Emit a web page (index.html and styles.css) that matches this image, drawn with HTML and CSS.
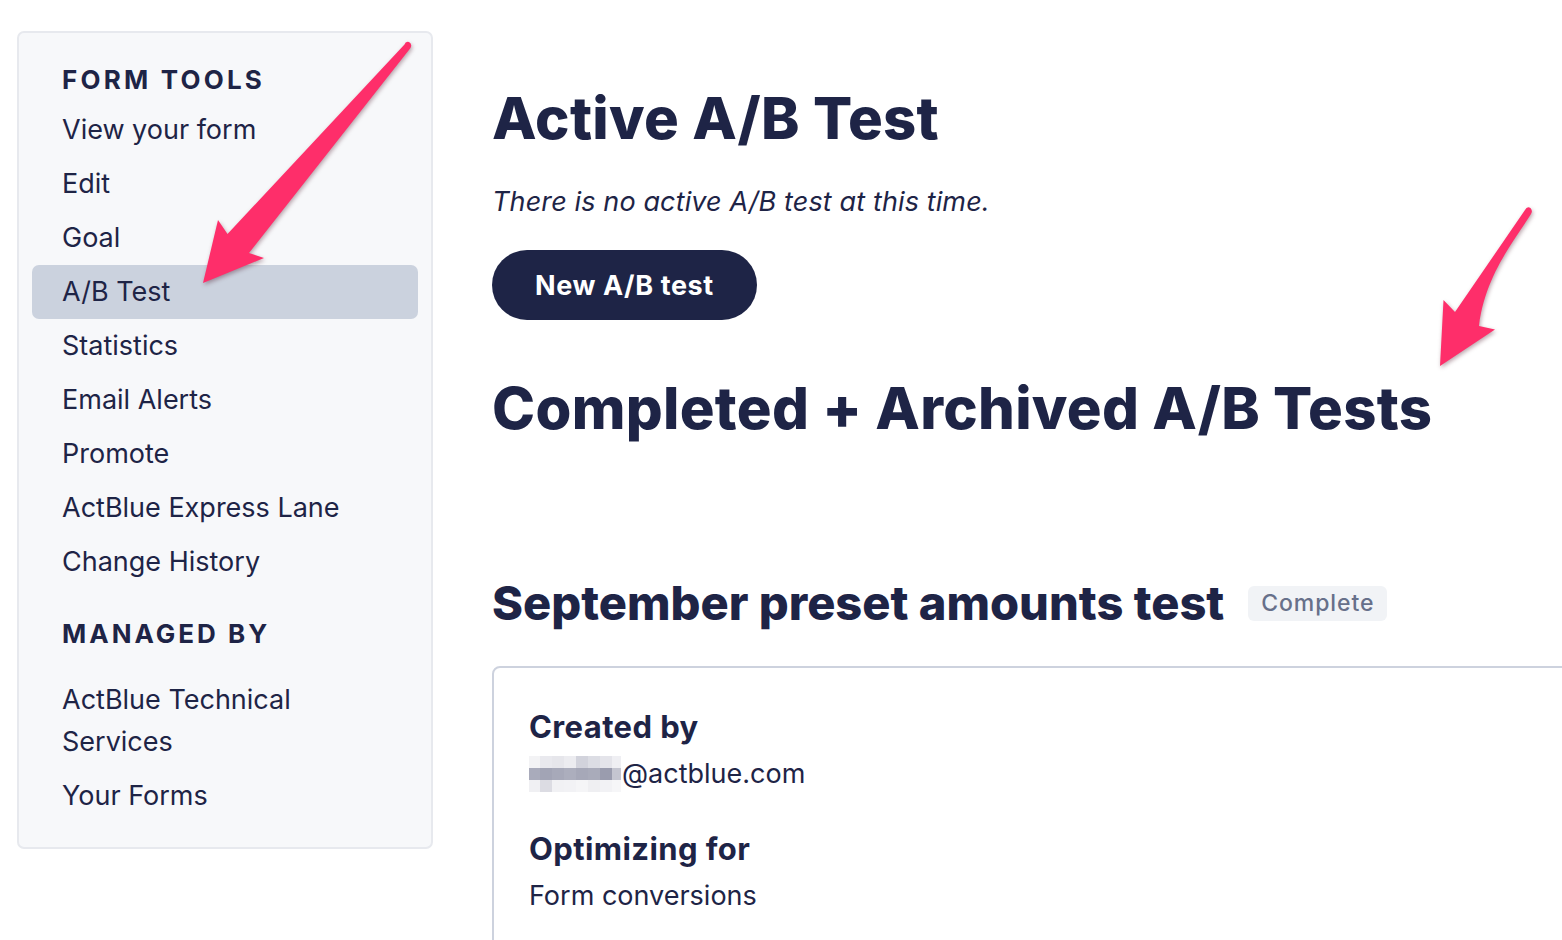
FILE: index.html
```html
<!DOCTYPE html>
<html lang="en">
<head>
<meta charset="utf-8">
<title>A/B Test</title>
<link rel="stylesheet" href="styles.css">
</head>
<body>
<div class="page">
  <aside class="sidebar">
    <h3 class="side-head">FORM TOOLS</h3>
    <ul class="side-list">
      <li class="side-item">View your form</li>
      <li class="side-item">Edit</li>
      <li class="side-item">Goal</li>
      <li class="side-item active">A/B Test</li>
      <li class="side-item">Statistics</li>
      <li class="side-item">Email Alerts</li>
      <li class="side-item">Promote</li>
      <li class="side-item">ActBlue Express Lane</li>
      <li class="side-item">Change History</li>
    </ul>
    <h3 class="side-head managed">MANAGED BY</h3>
    <ul class="side-list managed-list">
      <li class="side-item">ActBlue Technical Services</li>
      <li class="side-item">Your Forms</li>
    </ul>
  </aside>
  <main class="main">
    <h1 class="big-title">Active A/B Test</h1>
    <p class="empty-note">There is no active A/B test at this time.</p>
    <button class="btn-primary">New A/B test</button>
    <h1 class="big-title archived">Completed + Archived A/B Tests</h1>
    <div class="test-head">
      <h2 class="test-title">September preset amounts test</h2>
      <span class="badge">Complete</span>
    </div>
    <section class="card">
      <div class="field-label">Created by</div>
      <div class="field-value"><svg class="blur" width="92" height="36" viewBox="0 0 92 36">
        <rect x="0" y="0" width="92" height="36" fill="#f6f6f8"/>
        <rect x="0" y="0" width="11" height="12" fill="#f3f3f5"/>
        <rect x="11" y="0" width="12" height="12" fill="#e9e9ee"/>
        <rect x="23" y="0" width="12" height="12" fill="#e6e6eb"/>
        <rect x="35" y="0" width="12" height="12" fill="#ececf0"/>
        <rect x="47" y="0" width="12" height="12" fill="#d2d3dc"/>
        <rect x="59" y="0" width="12" height="12" fill="#dcdde4"/>
        <rect x="71" y="0" width="12" height="12" fill="#e4e4ea"/>
        <rect x="83" y="0" width="9" height="12" fill="#efeff3"/>
        <rect x="0" y="12" width="11" height="12" fill="#a9abbb"/>
        <rect x="11" y="12" width="12" height="12" fill="#a2a4b5"/>
        <rect x="23" y="12" width="12" height="12" fill="#a7a9b9"/>
        <rect x="35" y="12" width="12" height="12" fill="#acaebd"/>
        <rect x="47" y="12" width="12" height="12" fill="#a6a8b8"/>
        <rect x="59" y="12" width="12" height="12" fill="#a9abba"/>
        <rect x="71" y="12" width="12" height="12" fill="#9a9cae"/>
        <rect x="83" y="12" width="9" height="12" fill="#c4c5d0"/>
        <rect x="0" y="24" width="11" height="12" fill="#f0f0f3"/>
        <rect x="11" y="24" width="12" height="12" fill="#dcdce3"/>
        <rect x="23" y="24" width="12" height="12" fill="#f1f1f4"/>
        <rect x="35" y="24" width="12" height="12" fill="#f2f2f5"/>
        <rect x="47" y="24" width="12" height="12" fill="#f5f5f7"/>
        <rect x="59" y="24" width="12" height="12" fill="#efeff2"/>
        <rect x="71" y="24" width="12" height="12" fill="#f2f2f5"/>
        <rect x="83" y="24" width="9" height="12" fill="#f6f6f8"/>
      </svg>@actblue.com</div>
      <div class="field-label second">Optimizing for</div>
      <div class="field-value">Form conversions</div>
    </section>
  </main>
</div>
<svg class="arrows" width="1562" height="940" viewBox="0 0 1562 940">
  <path class="arrow" d="M404.5 44.5 Q405.5 41 409 42 Q412.5 44 410.5 48 L249 253 L264 258 L203 283 L218 220 L227.5 234 Z"/>
  <path class="arrow" d="M1525 210 Q1527 206 1530.5 208 Q1533 211 1531 214 C1515 240 1485 275 1479 326 L1495 329.5 L1440 366 L1443.5 300 L1455 312 Z"/>
</svg>
</body>
</html>
```

FILE: styles.css
```css
* { box-sizing: border-box; }
html, body { margin: 0; padding: 0; }
body {
  background: #ffffff;
  color: #1e2446;
  font-family: Inter, "Noto Sans", sans-serif;
  width: 1562px;
  height: 940px;
  overflow: hidden;
  position: relative;
}
.page {
  display: flex;
  align-items: flex-start;
  padding: 31px 0 0 17px;
}
.sidebar {
  flex: 0 0 416px;
  width: 416px;
  background: #f7f8fa;
  border: 2px solid #e7e9ee;
  border-radius: 7px;
  padding: 26px 13px 24px 13px;
}
.side-head {
  margin: 0 0 2px 0;
  padding-left: 30px;
  font-size: 26px;
  line-height: 42px;
  font-weight: 700;
  letter-spacing: 3.2px;
  color: #1e2446;
}
.side-head.managed { margin-top: 24px; margin-bottom: 18px; letter-spacing: 3px; }
.side-list { list-style: none; margin: 0; padding: 0; }
.side-item {
  padding: 6px 20px 6px 30px;
  font-size: 27px;
  line-height: 42px;
  color: #1e2446;
  border-radius: 7px;
}
.managed-list .side-item { padding-right: 90px; }
.side-item.active { background: #cbd2de; }
.main {
  flex: 1;
  margin-left: 59px;
  padding-top: 52px;
  min-width: 0;
}
.big-title {
  margin: 0;
  font-family: Inter, "DejaVu Sans", sans-serif;
  font-weight: 800;
  font-size: 58px;
  line-height: 70px;
  letter-spacing: 0.3px;
  color: #1e2446;
}
.big-title.archived { margin-top: 53px; }
.empty-note {
  margin: 29px 0 0 0;
  font-style: italic;
  font-size: 27px;
  line-height: 40px;
  letter-spacing: 0.12px;
}
.btn-primary {
  margin-top: 28px;
  display: inline-block;
  height: 70px;
  padding: 0 43px;
  border: none;
  border-radius: 35px;
  background: #1e2446;
  color: #ffffff;
  font-family: Inter, sans-serif;
  font-weight: 700;
  font-size: 27px;
  letter-spacing: 0.6px;
}
.test-head {
  margin-top: 132px;
  display: flex;
  align-items: center;
  gap: 24px;
}
.test-title {
  margin: 0;
  font-family: Inter, "DejaVu Sans", sans-serif;
  font-weight: 800;
  font-size: 47px;
  line-height: 56px;
}
.badge {
  display: inline-block;
  height: 35px;
  line-height: 35px;
  padding: 0 13px;
  background: #f1f3f6;
  border-radius: 6px;
  color: #67708a;
  font-size: 23px;
  font-weight: 500;
  letter-spacing: 0.9px;
}
.card {
  margin-top: 35px;
  width: 1200px;
  border: 2px solid #cdd2de;
  border-radius: 8px;
  padding: 39px 35px 40px 35px;
}
.field-label {
  font-weight: 700;
  font-size: 31px;
  line-height: 40px;
  letter-spacing: 0.4px;
}
.field-label.second { margin-top: 35px; }
.field-value {
  margin-top: 7px;
  font-size: 27px;
  line-height: 40px;
  display: flex;
  align-items: center;
}
.blur { display: block; margin-right: 1px; }
.arrows {
  position: absolute;
  left: 0;
  top: 0;
  pointer-events: none;
}
.arrow {
  fill: #fe2e6a;
  filter: drop-shadow(1px 2px 2px rgba(60, 0, 20, 0.35));
}
```
